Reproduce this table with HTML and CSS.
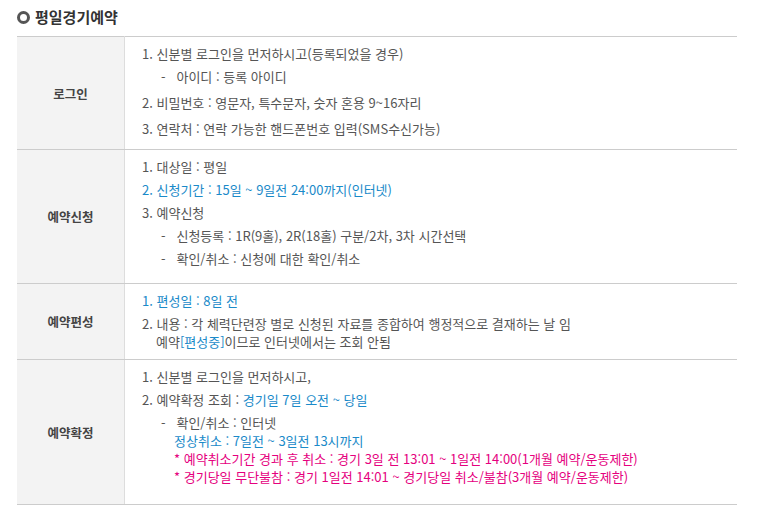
FILE: index.html
```html
<!DOCTYPE html>
<html lang="ko">
<head>
    <meta charset="UTF-8">
    <title>평일경기예약</title>
    <link rel="stylesheet" href="styles.css">
</head>
<body>
    <div class="wrap">
        <h3 class="tit"><span class="tit-icon"></span>평일경기예약</h3>
        <table class="info-table">
            <tr>
                <th>로그인</th>
                <td class="pb-login">
                    <p class="item">1. 신분별 로그인을 먼저하시고(등록되었을 경우)</p>
                    <p class="sub">-&nbsp;&nbsp;&nbsp;아이디 : 등록 아이디</p>
                    <p class="item wide">2. 비밀번호 : 영문자, 특수문자, 숫자 혼용 9~16자리</p>
                    <p class="item wide">3. 연락처 : 연락 가능한 핸드폰번호 입력(SMS수신가능)</p>
                </td>
            </tr>
            <tr>
                <th>예약신청</th>
                <td class="pb-apply">
                    <p class="item">1. 대상일 : 평일</p>
                    <p class="item blue">2. 신청기간 : 15일 ~ 9일전 24:00까지(인터넷)</p>
                    <p class="item">3. 예약신청</p>
                    <p class="sub">-&nbsp;&nbsp;&nbsp;신청등록 : 1R(9홀), 2R(18홀) 구분/2차, 3차 시간선택</p>
                    <p class="sub">-&nbsp;&nbsp;&nbsp;확인/취소 : 신청에 대한 확인/취소</p>
                </td>
            </tr>
            <tr>
                <th>예약편성</th>
                <td class="pb-edit">
                    <p class="item blue">1. 편성일 : 8일 전</p>
                    <p class="item wrapped">2. 내용 : 각 체력단련장 별로 신청된 자료를 종합하여 행정적으로 결재하는 날 임<br><span class="indent">예약<span class="blue">[편성중]</span>이므로 인터넷에서는 조회 안됨</span></p>
                </td>
            </tr>
            <tr>
                <th>예약확정</th>
                <td class="pb-confirm">
                    <p class="item">1. 신분별 로그인을 먼저하시고,</p>
                    <p class="item">2. 예약확정 조회 : <span class="blue">경기일 7일 오전 ~ 당일</span></p>
                    <div class="sub-block">
                        <p>-&nbsp;&nbsp;&nbsp;확인/취소 : 인터넷</p>
                        <p class="cont blue">정상취소 : 7일전 ~ 3일전 13시까지</p>
                        <p class="cont pink">* 예약취소기간 경과 후 취소 : 경기 3일 전 13:01 ~ 1일전 14:00(1개월 예약/운동제한)</p>
                        <p class="cont pink">* 경기당일 무단불참 : 경기 1일전 14:01 ~ 경기당일 취소/불참(3개월 예약/운동제한)</p>
                    </div>
                </td>
            </tr>
        </table>
    </div>
</body>
</html>
```

FILE: styles.css
```css
body {
    margin: 0;
    font-family: "Noto Sans CJK KR", "Noto Sans", sans-serif;
    font-size: 13px;
    color: #555;
    background: #fff;
}

.wrap {
    padding: 7px 0 0 17px;
    width: 720px;
}

p {
    margin: 0;
}

/* 제목 */
.tit {
    display: flex;
    align-items: center;
    gap: 5px;
    margin: 0 0 9px;
    font-size: 15px;
    font-weight: bold;
    color: #333;
    line-height: 20px;
}

.tit-icon {
    width: 7px;
    height: 7px;
    border: 3px solid #555;
    border-radius: 50%;
}

/* 표 */
.info-table {
    width: 720px;
    border-collapse: collapse;
    border-top: 1px solid #ccc;
}

.info-table th,
.info-table td {
    border-bottom: 1px solid #ccc;
    vertical-align: middle;
}

.info-table th {
    width: 105px;
    background-color: #f3f3f3;
    border-right: 1px solid #ddd;
    color: #444;
    font-size: 12.5px;
    font-weight: bold;
    text-align: center;
}

.info-table td {
    padding: 3px 18px 6px 17px;
    text-align: left;
    vertical-align: top;
}

.item {
    line-height: 18px;
    margin: 5px 0;
}

.item.wide {
    margin: 8px 0;
}

.indent {
    padding-left: 14px;
}

.sub {
    line-height: 18px;
    margin: 5px 0;
    padding-left: 19px;
}

.sub-block {
    margin-top: 5px;
    padding-left: 19px;
    line-height: 18px;
}

.cont {
    padding-left: 13px;
}

.pb-login {
    padding-bottom: 3px !important;
}

.pb-apply {
    padding-bottom: 10px !important;
}

.pb-edit {
    padding-bottom: 3px !important;
}

.pb-confirm {
    padding-bottom: 18px !important;
}

.blue {
    color: #1a8ac9;
}

.pink {
    color: #e5007e;
}
```
